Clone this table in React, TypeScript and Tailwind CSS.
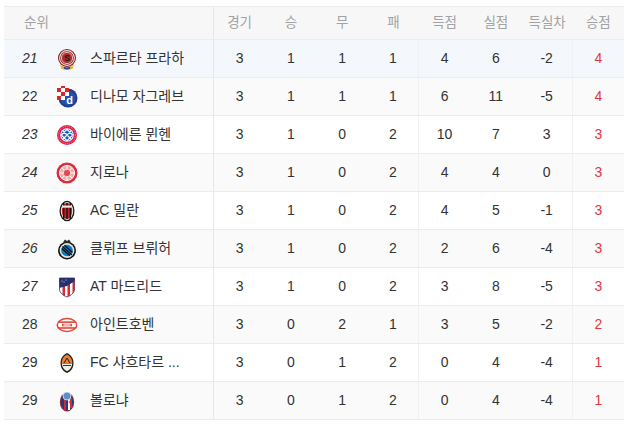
import React from "react";

type Row = { rank: number; name: string; logo: string; s: number[]; it: boolean };

const rows: Row[] = [
  { rank: 21, name: "스파르타 프라하", logo: "sparta", s: [3, 1, 1, 1, 4, 6, -2, 4], it: true },
  { rank: 22, name: "디나모 자그레브", logo: "dinamo", s: [3, 1, 1, 1, 6, 11, -5, 4], it: false },
  { rank: 23, name: "바이에른 뮌헨", logo: "bayern", s: [3, 1, 0, 2, 10, 7, 3, 3], it: true },
  { rank: 24, name: "지로나", logo: "girona", s: [3, 1, 0, 2, 4, 4, 0, 3], it: true },
  { rank: 25, name: "AC 밀란", logo: "milan", s: [3, 1, 0, 2, 4, 5, -1, 3], it: true },
  { rank: 26, name: "클뤼프 브뤼허", logo: "brugge", s: [3, 1, 0, 2, 2, 6, -4, 3], it: true },
  { rank: 27, name: "AT 마드리드", logo: "atletico", s: [3, 1, 0, 2, 3, 8, -5, 3], it: true },
  { rank: 28, name: "아인트호벤", logo: "psv", s: [3, 0, 2, 1, 3, 5, -2, 2], it: false },
  { rank: 29, name: "FC 샤흐타르 ...", logo: "shakhtar", s: [3, 0, 1, 2, 0, 4, -4, 1], it: false },
  { rank: 29, name: "볼로냐", logo: "bologna", s: [3, 0, 1, 2, 0, 4, -4, 1], it: false },
];

const heads = ["경기", "승", "무", "패", "득점", "실점", "득실차", "승점"];

function Logo({ kind }: { kind: string }) {
  const common = { width: 22, height: 22, viewBox: "0 0 22 22" };
  switch (kind) {
    case "sparta":
      return (
        <svg {...common}>
          <circle cx="11" cy="10" r="9" fill="#8b1a1f" />
          <circle cx="11" cy="10" r="7.4" fill="none" stroke="#f0e4d6" strokeWidth="1.1" />
          <circle cx="11" cy="10" r="5.6" fill="#b02a30" stroke="#f2e8dc" strokeWidth="0.8" />
          <text x="11" y="13.2" textAnchor="middle" fontSize="8.5" fontWeight="bold" fill="#1a1a1a" fontFamily="Liberation Sans, sans-serif">S</text>
          <path d="M4 16.5 L7 18.5 L11 19.5 L15 18.5 L18 16.5 L16.5 21 L11 22 L5.5 21 Z" fill="#e8b23a" />
          <path d="M7.5 18.8 L11 19.6 L14.5 18.8 L13.8 21 L11 21.6 L8.2 21 Z" fill="#2b4aa0" />
        </svg>
      );
    case "dinamo":
      return (
        <svg {...common}>
          <circle cx="12" cy="12" r="9.5" fill="#1f3f8f" />
          <circle cx="12" cy="12" r="7.6" fill="#2350a8" />
          <g>
            <rect x="1" y="2" width="4" height="4" fill="#d62a2a" />
            <rect x="5" y="2" width="4" height="4" fill="#fff" />
            <rect x="9" y="2" width="4" height="4" fill="#d62a2a" />
            <rect x="1" y="6" width="4" height="4" fill="#fff" />
            <rect x="5" y="6" width="4" height="4" fill="#d62a2a" />
            <rect x="9" y="6" width="4" height="4" fill="#fff" />
            <rect x="1" y="10" width="4" height="4" fill="#d62a2a" />
            <rect x="5" y="10" width="4" height="4" fill="#fff" />
            <rect x="5" y="0" width="4" height="2" fill="#d62a2a" />
          </g>
          <text x="13.5" y="18" textAnchor="middle" fontSize="11" fontWeight="bold" fill="#fff" fontFamily="Liberation Sans, sans-serif">d</text>
        </svg>
      );
    case "bayern":
      return (
        <svg {...common}>
          <circle cx="11" cy="11" r="10" fill="#dc1f4a" />
          <circle cx="11" cy="11" r="6.8" fill="#fff" />
          <circle cx="11" cy="11" r="5.8" fill="#1a5cb8" />
          <path d="M7 7 L15 15 M11 5.3 L16.7 11 M5.3 11 L11 16.7 M15 7 L7 15 M11 5.3 L5.3 11 M16.7 11 L11 16.7" stroke="#fff" strokeWidth="1.1" />
          <circle cx="11" cy="11" r="8.5" fill="none" stroke="#f7c5d1" strokeWidth="0.6" strokeDasharray="1 1" />
        </svg>
      );
    case "girona":
      return (
        <svg {...common}>
          <circle cx="11" cy="11" r="10.5" fill="#dc2d3d" />
          <circle cx="11" cy="11" r="7.5" fill="#f3a9a8" stroke="#fff" strokeWidth="1" />
          <path d="M11 3.5 V18.5 M3.5 11 H18.5 M5.7 5.7 L16.3 16.3 M16.3 5.7 L5.7 16.3" stroke="#fff" strokeWidth="1" />
          <circle cx="11" cy="11" r="3.8" fill="#e44a55" stroke="#fff" strokeWidth="0.8" />
        </svg>
      );
    case "milan":
      return (
        <svg {...common}>
          <ellipse cx="11" cy="11" rx="7.5" ry="10.3" fill="#1a1a1a" />
          <ellipse cx="11" cy="11" rx="6.2" ry="9" fill="#f0e7da" />
          <ellipse cx="11" cy="11" rx="5.2" ry="8" fill="#c8202a" />
          <rect x="7" y="3" width="1.4" height="16" fill="#111" />
          <rect x="10.3" y="3" width="1.4" height="16" fill="#111" />
          <rect x="13.6" y="3" width="1.4" height="16" fill="#111" />
          <rect x="6" y="5.5" width="10" height="2.2" fill="#f0e7da" />
        </svg>
      );
    case "brugge":
      return (
        <svg {...common}>
          <circle cx="11" cy="12.5" r="9" fill="#111" />
          <circle cx="11" cy="12.5" r="7.4" fill="#e7e3d6" />
          <circle cx="11" cy="12.5" r="5.8" fill="#0a7ac4" />
          <path d="M5.8 10.5 L14 17.8 M6.5 8.5 L16 17 M8.5 7.2 L16.5 14.5" stroke="#111" strokeWidth="1.2" />
          <path d="M7.5 3.5 L9 1.5 L11 3 L13 1.5 L14.5 3.5 L14 5 H8 Z" fill="#2b2b2b" />
        </svg>
      );
    case "atletico":
      return (
        <svg {...common}>
          <path d="M3.5 2 H18.5 V13 C18.5 17 15 19.5 11 21 C7 19.5 3.5 17 3.5 13 Z" fill="#fff" stroke="#27306e" strokeWidth="0.8" />
          <clipPath id="atl">
            <path d="M3.5 2 H18.5 V13 C18.5 17 15 19.5 11 21 C7 19.5 3.5 17 3.5 13 Z" />
          </clipPath>
          <g clipPath="url(#atl)">
            <rect x="6.5" y="0" width="2.5" height="22" fill="#d62a2e" />
            <rect x="11.5" y="0" width="2.5" height="22" fill="#d62a2e" />
            <rect x="16.5" y="0" width="2.5" height="22" fill="#d62a2e" />
            <path d="M3 1 H19 V5 L11 10 L3 12 Z" fill="#27306e" />
            <circle cx="6" cy="5" r="0.5" fill="#fff" />
            <circle cx="8" cy="6" r="0.5" fill="#fff" />
            <circle cx="10" cy="4" r="0.5" fill="#fff" />
          </g>
        </svg>
      );
    case "psv":
      return (
        <svg {...common}>
          <ellipse cx="11" cy="11" rx="10.5" ry="7.2" fill="#e2473c" />
          <ellipse cx="11" cy="11" rx="9" ry="5.8" fill="#fff" />
          <rect x="2" y="7.3" width="18" height="1.6" fill="#e2473c" />
          <rect x="2" y="13.2" width="18" height="1.6" fill="#e2473c" />
          <rect x="6" y="9.8" width="10" height="2.5" fill="#e2473c" />
          <rect x="7.5" y="10.4" width="7" height="1.2" fill="#fff" />
        </svg>
      );
    case "shakhtar":
      return (
        <svg {...common}>
          <path d="M11 1 C15 3 17.5 6 17.5 11 C17.5 16 15 19.5 11 21 C7 19.5 4.5 16 4.5 11 C4.5 6 7 3 11 1 Z" fill="#222" />
          <path d="M11 2.5 C14.5 4.5 16.3 7 16.3 11 L5.7 11 C5.7 7 7.5 4.5 11 2.5 Z" fill="#ef7d2f" />
          <path d="M5.8 11.5 H16.2 C16 15 14 17.8 11 19.3 C8 17.8 6 15 5.8 11.5 Z" fill="#f3ece2" />
          <path d="M8 11 L11 6 L14 11" fill="none" stroke="#222" strokeWidth="1" />
          <rect x="7" y="13" width="8" height="1" fill="#333" />
        </svg>
      );
    case "bologna":
      return (
        <svg {...common}>
          <ellipse cx="11" cy="12" rx="7.2" ry="9.6" fill="#9c2a2b" />
          <ellipse cx="11" cy="12" rx="6.2" ry="8.6" fill="#1f3c8a" />
          <rect x="8" y="8" width="2" height="12" fill="#d12d2d" />
          <rect x="12" y="8" width="2" height="12" fill="#fff" />
          <rect x="14" y="8" width="2" height="10" fill="#d12d2d" />
          <path d="M12.5 12 H15.5 M14 10.5 V13.5" stroke="#d12d2d" strokeWidth="0.8" />
          <circle cx="11" cy="6" r="4" fill="#5a8fc8" stroke="#e4eaf2" strokeWidth="0.8" />
        </svg>
      );
    default:
      return null;
  }
}

export default function App() {
  return (
    <div className="w-[629px] h-[425px] bg-white pt-[6px] pl-[4px]" style={{ fontFamily: '"Liberation Sans", "Noto Sans CJK KR", sans-serif' }}>
      <div className="w-[620px] border-t border-[#ececec]">
        <div className="grid grid-cols-[210px_repeat(8,1fr)] h-[33px] bg-[#f7f7f8] border-b border-[#ececec] text-[13.5px] text-[#a2a2a2]">
          <div className="flex items-center pl-[20px] border-r border-[#e6e6e6]">순위</div>
          {heads.map((h) => (
            <div key={h} className="flex items-center justify-center">{h}</div>
          ))}
        </div>
        {rows.map((r, i) => (
          <div
            key={i}
            className={`grid grid-cols-[210px_repeat(8,1fr)] h-[38px] border-b border-[#ececec] text-[14px] text-[#333] ${
              i === 0 ? "bg-[#f4f8fd]" : i % 2 === 1 ? "bg-[#fafafa]" : "bg-white"
            }`}
          >
            <div className="flex items-center border-r border-[#e6e6e6]">
              <div className={`w-[52px] pl-[18px] text-[#333] ${r.it ? "italic" : ""}`}>{r.rank}</div>
              <div className="w-[22px] h-[22px] flex items-center justify-center">
                <Logo kind={r.logo} />
              </div>
              <div className="ml-[12px] whitespace-nowrap">{r.name}</div>
            </div>
            {r.s.map((v, j) => (
              <div
                key={j}
                className={`flex items-center justify-center ${j === 3 || j === 6 ? "border-r border-[#f1f1f1]" : ""} ${
                  j === 7 ? "text-[#e0383e]" : ""
                }`}
              >
                {v}
              </div>
            ))}
          </div>
        ))}
      </div>
    </div>
  );
}
